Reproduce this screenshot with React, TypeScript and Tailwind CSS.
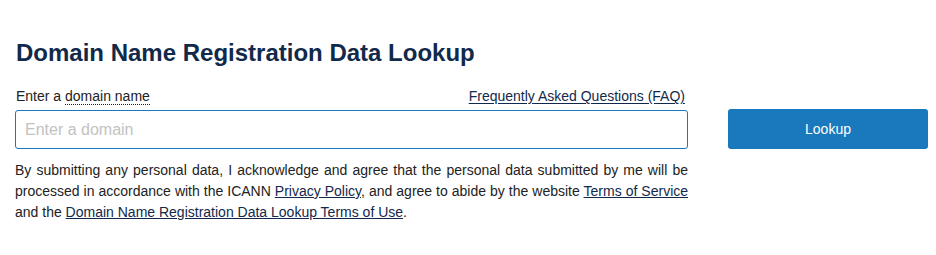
import React from "react";

export default function App() {
  return (
    <div className="w-[936px] h-[255px] bg-white font-['Liberation_Sans',Arial,sans-serif] text-[#1a1a1a]">
      <div className="pl-[15px] pt-[38px]">
        <h1 className="pl-px text-[24px] leading-[30px] font-bold text-[#11294a]">
          Domain Name Registration Data Lookup
        </h1>
        <div className="mt-[19px] flex items-start">
          <div className="w-[673px]">
            <div className="flex justify-between items-end text-[14px] leading-[18px] pr-[3px]">
              <label className="pl-px text-[#222]">
                Enter a{" "}
                <span className="border-b border-dotted border-[#222]">domain name</span>
              </label>
              <a className="underline text-[#11294a] underline-offset-[2px]">
                Frequently Asked Questions (FAQ)
              </a>
            </div>
            <input
              className="mt-[5px] block w-full h-[39px] rounded-[3px] border border-solid border-[#1a77bd] px-[9px] text-[16px] placeholder:text-[#c2c2c2] outline-none"
              placeholder="Enter a domain"
            />
            <p className="mt-[11px] text-[14px] leading-[21px] text-justify text-[#222]">
              By submitting any personal data, I acknowledge and agree that the personal data submitted by me will be
              processed in accordance with the ICANN{" "}
              <a className="underline text-[#11294a]">Privacy Policy</a>, and agree to abide by the website{" "}
              <a className="underline text-[#11294a]">Terms of Service</a> and the{" "}
              <a className="underline text-[#11294a]">Domain Name Registration Data Lookup Terms of Use</a>.
            </p>
          </div>
          <button className="ml-[40px] mt-[22px] w-[200px] h-[40px] rounded-[3px] bg-[#1a78bd] text-white text-[14px]">
            Lookup
          </button>
        </div>
      </div>
    </div>
  );
}
